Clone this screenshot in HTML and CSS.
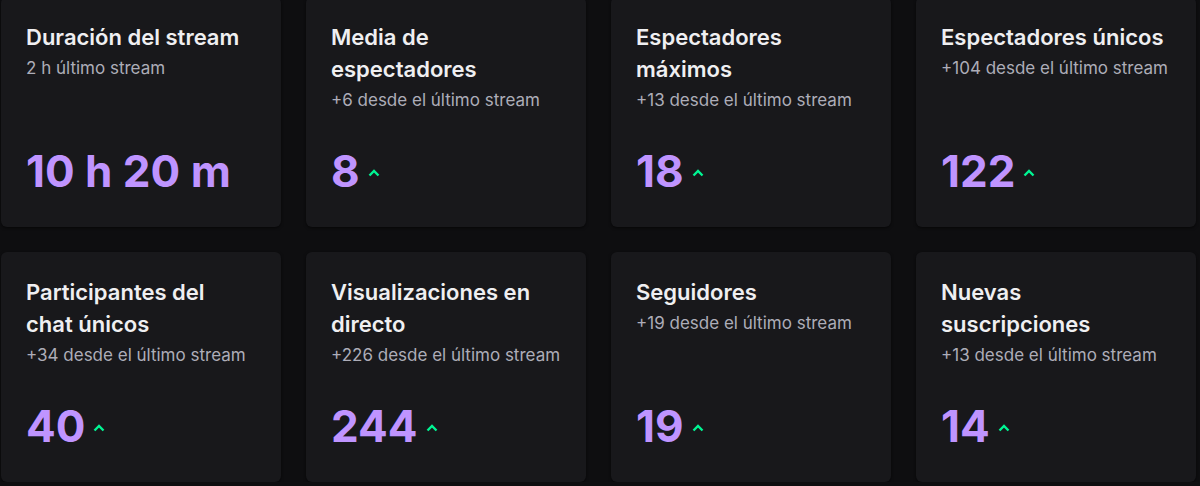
FILE: index.html
```html
<!DOCTYPE html>
<html lang="es">
<head>
    <meta charset="UTF-8">
    <meta name="viewport" content="width=device-width, initial-scale=1.0">
    <title>Resumen del stream</title>
    <link rel="stylesheet" href="styles.css">
</head>
<body>

    <div class="stats-grid">
        <div class="stat-card">
            <h3 class="stat-title">Duración del stream</h3>
            <p class="stat-sub">2 h último stream</p>
            <div class="stat-value">10 h 20 m</div>
        </div>
        <div class="stat-card">
            <h3 class="stat-title">Media de espectadores</h3>
            <p class="stat-sub">+6 desde el último stream</p>
            <div class="stat-value">8 <svg class="trend-up" viewBox="0 0 12 8"><path d="M1.5 6.5 6 2l4.5 4.5" /></svg></div>
        </div>
        <div class="stat-card">
            <h3 class="stat-title">Espectadores máximos</h3>
            <p class="stat-sub">+13 desde el último stream</p>
            <div class="stat-value">18 <svg class="trend-up" viewBox="0 0 12 8"><path d="M1.5 6.5 6 2l4.5 4.5" /></svg></div>
        </div>
        <div class="stat-card">
            <h3 class="stat-title">Espectadores únicos</h3>
            <p class="stat-sub">+104 desde el último stream</p>
            <div class="stat-value">122 <svg class="trend-up" viewBox="0 0 12 8"><path d="M1.5 6.5 6 2l4.5 4.5" /></svg></div>
        </div>
        <div class="stat-card">
            <h3 class="stat-title">Participantes del chat únicos</h3>
            <p class="stat-sub">+34 desde el último stream</p>
            <div class="stat-value">40 <svg class="trend-up" viewBox="0 0 12 8"><path d="M1.5 6.5 6 2l4.5 4.5" /></svg></div>
        </div>
        <div class="stat-card">
            <h3 class="stat-title">Visualizaciones en directo</h3>
            <p class="stat-sub">+226 desde el último stream</p>
            <div class="stat-value">244 <svg class="trend-up" viewBox="0 0 12 8"><path d="M1.5 6.5 6 2l4.5 4.5" /></svg></div>
        </div>
        <div class="stat-card">
            <h3 class="stat-title">Seguidores</h3>
            <p class="stat-sub">+19 desde el último stream</p>
            <div class="stat-value">19 <svg class="trend-up" viewBox="0 0 12 8"><path d="M1.5 6.5 6 2l4.5 4.5" /></svg></div>
        </div>
        <div class="stat-card">
            <h3 class="stat-title">Nuevas suscripciones</h3>
            <p class="stat-sub">+13 desde el último stream</p>
            <div class="stat-value">14 <svg class="trend-up" viewBox="0 0 12 8"><path d="M1.5 6.5 6 2l4.5 4.5" /></svg></div>
        </div>
    </div>

</body>
</html>
```

FILE: styles.css
```css
body {
    font-family: Inter, "Noto Sans", sans-serif;
    background-color: #0e0e10;
    margin: 0;
    overflow: hidden;
}
.stats-grid {
    display: grid;
    grid-template-columns: repeat(4, 280px);
    grid-auto-rows: 230px;
    gap: 25px;
    margin: -3px 0 0 1px; /* the grid is scrolled a little past the top */
}
.stat-card {
    background-color: #18181b;
    border-radius: 6px;
    box-shadow: 0 1px 3px rgba(0, 0, 0, 0.6);
    padding: 24px 20px 20px 25px;
    display: flex;
    flex-direction: column;
}
.stat-title {
    margin: 0;
    max-width: 225px;
    color: #efeff1;
    font-size: 22px;
    font-weight: 600;
    line-height: 32px;
}
.stat-sub {
    margin: 3px 0 0;
    color: #adadb8;
    font-size: 17px;
    line-height: 24px;
}
.stat-value {
    margin-top: auto;
    margin-bottom: 9px;
    color: #bf94ff;
    font-size: 44px;
    font-weight: 700;
    line-height: 54px;
    display: flex;
    align-items: center;
}
.trend-up {
    width: 12px;
    height: 8px;
    margin-left: 8px;
    margin-top: 4px;
    fill: none;
    stroke: #00f593;
    stroke-width: 2.4;
}
```
